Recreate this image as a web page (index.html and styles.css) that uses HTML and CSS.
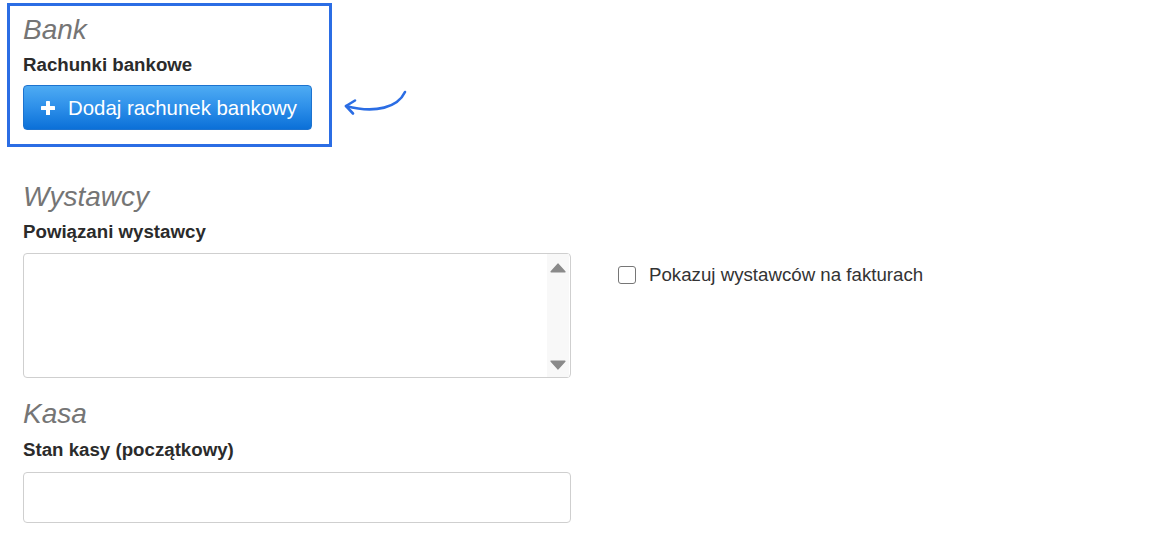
FILE: index.html
```html
<!DOCTYPE html>
<html lang="pl">
<head>
<meta charset="utf-8">
<title>Ustawienia</title>
<link rel="stylesheet" href="styles.css">
</head>
<body>
<div class="page">
  <div class="bank-row">
    <section class="highlight">
      <h2 class="section-title">Bank</h2>
      <div class="field-label">Rachunki bankowe</div>
      <button class="btn-primary" type="button">
        <svg class="btn-icon" viewBox="0 0 14 14" width="14" height="14" aria-hidden="true">
          <rect x="5" y="0" width="4" height="14" rx="0.6" fill="#fff"/>
          <rect x="0" y="5" width="14" height="4" rx="0.6" fill="#fff"/>
        </svg>
        <span>Dodaj rachunek bankowy</span>
      </button>
    </section>
    <svg class="callout-arrow" viewBox="0 0 70 32" width="70" height="32" aria-hidden="true">
      <path d="M65 7 C58 22 36 29 6 21" fill="none" stroke="#2b6de4" stroke-width="2.6" stroke-linecap="round"/>
      <path d="M15 15.5 L6 21 L13 28.5" fill="none" stroke="#2b6de4" stroke-width="2.6" stroke-linecap="round" stroke-linejoin="round"/>
    </svg>
  </div>

  <section class="section section-issuers">
    <h2 class="section-title">Wystawcy</h2>
    <div class="field-row">
      <div class="col-main">
        <div class="field-label">Powiązani wystawcy</div>
        <div class="listbox">
          <div class="listbox-body"></div>
          <div class="listbox-scroll">
            <svg class="scroll-arrow" viewBox="0 0 16 10" width="16" height="10" aria-hidden="true">
              <polygon points="8,1.2 14.8,8.8 1.2,8.8" fill="#8a8a8a" stroke="#8a8a8a" stroke-width="1.6" stroke-linejoin="round"/>
            </svg>
            <svg class="scroll-arrow" viewBox="0 0 16 10" width="16" height="10" aria-hidden="true">
              <polygon points="1.2,1.2 14.8,1.2 8,8.8" fill="#8a8a8a" stroke="#8a8a8a" stroke-width="1.6" stroke-linejoin="round"/>
            </svg>
          </div>
        </div>
      </div>
      <div class="col-side">
        <label class="check-row">
          <span class="checkbox"></span>
          <span>Pokazuj wystawców na fakturach</span>
        </label>
      </div>
    </div>
  </section>

  <section class="section section-cash">
    <h2 class="section-title">Kasa</h2>
    <div class="field-label label-cash">Stan kasy (początkowy)</div>
    <div class="text-input"></div>
  </section>
</div>
</body>
</html>
```

FILE: styles.css
```css
html, body {
  margin: 0;
  padding: 0;
  background: #fff;
}

body {
  font-family: "Liberation Sans", Arial, sans-serif;
  color: #2b2b2b;
}

.page {
  padding: 3px 0 0 7px;
}

.bank-row {
  display: flex;
  align-items: flex-start;
}

.highlight {
  box-sizing: border-box;
  width: 325px;
  border: 3px solid #2b6de4;
  padding: 8px 17px 14px 13px;
}

.callout-arrow {
  display: block;
  margin: 82px 0 0 8px;
  flex: none;
}

.section-title {
  margin: 0;
  font-size: 28px;
  line-height: 32px;
  font-style: italic;
  font-weight: normal;
  color: #757575;
}

.field-label {
  margin-top: 8px;
  font-size: 18.7px;
  line-height: 22px;
  font-weight: bold;
  color: #2b2b2b;
}

.btn-primary {
  box-sizing: border-box;
  margin-top: 9px;
  height: 45px;
  width: 289px;
  display: flex;
  align-items: center;
  gap: 13px;
  padding: 0 10px 0 17px;
  border: 1px solid #1d73cf;
  border-radius: 4px;
  background: linear-gradient(to bottom, #4eabf3 0%, #2d8fe9 50%, #0b70d8 100%);
  color: #fff;
  font-family: "Liberation Sans", Arial, sans-serif;
  font-size: 20.4px;
  line-height: 24px;
  cursor: pointer;
}

.btn-icon {
  display: block;
  flex: none;
}

.section {
  margin-left: 16px;
}

.section-issuers {
  margin-top: 34px;
}

.field-row {
  display: flex;
  align-items: flex-start;
  gap: 47px;
}

.col-main {
  width: 548px;
  flex: none;
}

.listbox {
  box-sizing: border-box;
  margin-top: 10px;
  height: 125px;
  width: 548px;
  border: 1px solid #cfcfcf;
  border-radius: 4px;
  display: flex;
  padding-right: 1px;
  background: #fff;
}

.listbox-body {
  flex: 1;
}

.listbox-scroll {
  width: 22px;
  background: #f8f8f8;
  display: flex;
  flex-direction: column;
  justify-content: space-between;
  align-items: center;
  padding: 9px 0 7px;
}

.scroll-arrow {
  display: block;
}

.col-side {
  padding-top: 51px;
}

.check-row {
  display: flex;
  align-items: center;
  gap: 13px;
  height: 22px;
  font-size: 18.7px;
  line-height: 22px;
  color: #333;
}

.checkbox {
  box-sizing: border-box;
  width: 18px;
  height: 18px;
  border: 1.5px solid #767676;
  border-radius: 3px;
  background: #fff;
  flex: none;
}

.section-cash {
  margin-top: 20px;
}

.label-cash {
  margin-top: 9px;
}

.text-input {
  box-sizing: border-box;
  margin-top: 11px;
  width: 548px;
  height: 51px;
  border: 1px solid #cfcfcf;
  border-radius: 4px;
  background: #fff;
}
```
